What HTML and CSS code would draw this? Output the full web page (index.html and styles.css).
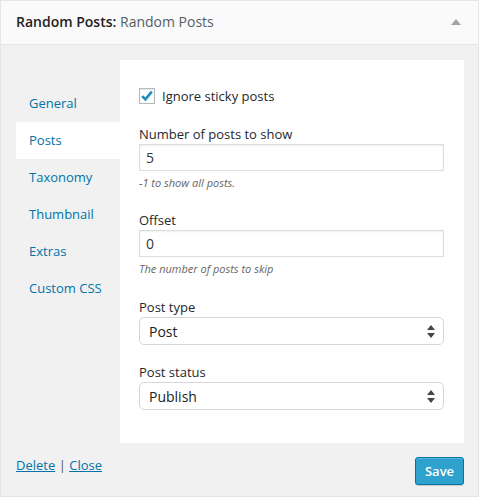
FILE: index.html
```html
<!DOCTYPE html>
<html>
<head>
<meta charset="utf-8">
<link rel="stylesheet" href="styles.css">
</head>
<body>
<div class="widget">
  <div class="widget-top">
    <h3 class="widget-title">Random Posts:<span class="in-title"> Random Posts</span></h3>
    <svg class="toggle" width="10" height="6" viewBox="0 0 10 6"><path d="M0 6 L5 0 L10 6 Z" fill="#a0a5aa"/></svg>
  </div>
  <div class="widget-inside">
    <div class="tabs-wrap">
      <ul class="tabs">
        <li class="tab">General</li>
        <li class="tab active">Posts</li>
        <li class="tab">Taxonomy</li>
        <li class="tab">Thumbnail</li>
        <li class="tab">Extras</li>
        <li class="tab">Custom CSS</li>
      </ul>
      <div class="panel">
        <label class="check-row">
          <span class="checkbox"><svg width="14" height="14" viewBox="0 0 14 14"><path d="M2.2 7.2 L5.4 10.4 L11.8 2.6" fill="none" stroke="#1e8cbe" stroke-width="2.6"/></svg></span>
          <span>Ignore sticky posts</span>
        </label>
        <div class="field f1">
          <div class="label">Number of posts to show</div>
          <div class="input">5</div>
          <div class="hint">-1 to show all posts.</div>
        </div>
        <div class="field f2">
          <div class="label">Offset</div>
          <div class="input">0</div>
          <div class="hint">The number of posts to skip</div>
        </div>
        <div class="field f3">
          <div class="label">Post type</div>
          <div class="select"><span>Post</span><svg width="8" height="13" viewBox="0 0 8 13"><path d="M4 0 L8 5 L0 5 Z M0 8 L8 8 L4 13 Z" fill="#444"/></svg></div>
        </div>
        <div class="field f4">
          <div class="label">Post status</div>
          <div class="select"><span>Publish</span><svg width="8" height="13" viewBox="0 0 8 13"><path d="M4 0 L8 5 L0 5 Z M0 8 L8 8 L4 13 Z" fill="#444"/></svg></div>
        </div>
      </div>
    </div>
    <div class="actions">
      <div class="links"><a>Delete</a> <span class="sep">|</span> <a>Close</a></div>
      <button class="save">Save</button>
    </div>
  </div>
</div>
</body>
</html>
```
FILE: styles.css
```css
html, body {
  margin: 0;
  padding: 0;
  background: #fff;
  font-family: "Open Sans", "Liberation Sans", sans-serif;
  color: #23282d;
}
.widget {
  width: 477px;
  border: 1px solid #e5e5e5;
  box-shadow: 0 1px 1px rgba(0,0,0,.04);
}
.widget-top {
  height: 43px;
  background: #fafafa;
  border-bottom: 1px solid #e5e5e5;
  display: flex;
  align-items: center;
  justify-content: space-between;
  padding: 0 16px 0 15px;
}
.widget-title {
  margin: 0;
  font-size: 14px;
  font-weight: 600;
  color: #222;
  line-height: 1;
  padding-bottom: 2px;
}
.in-title {
  font-weight: 400;
  color: #555d66;
}
.toggle { margin-right: 1px; margin-top: -2px; }
.widget-inside {
  background: #f1f1f1;
  padding: 15px 14px 11px 15px;
}
.tabs-wrap {
  display: flex;
}
.tabs {
  list-style: none;
  margin: 0;
  padding: 25px 0 0 0;
  width: 104px;
}
.tab {
  height: 37px;
  line-height: 36px;
  padding-left: 13px;
  font-size: 13px;
  color: #0073aa;
}
.tab.active {
  background: #fff;
}
.panel {
  background: #fff;
  width: 344px;
  padding: 27px 20px 0 19px;
  box-sizing: border-box;
  height: 383px;
}
.check-row {
  display: flex;
  align-items: center;
  font-size: 13px;
  height: 18px;
  gap: 7px;
}
.checkbox {
  width: 16px;
  height: 16px;
  box-sizing: border-box;
  border: 1px solid #b4b9be;
  box-shadow: inset 0 1px 2px rgba(0,0,0,.1);
  display: flex;
  align-items: center;
  justify-content: center;
  background: #fff;
}
.field.f1 { margin-top: 19px; }
.field.f2 { margin-top: 20px; }
.field.f3 { margin-top: 21px; }
.field.f4 { margin-top: 17px; }
.label {
  font-size: 13px;
  line-height: 20px;
  height: 20px;
}
.input {
  height: 27px;
  box-sizing: border-box;
  border: 1px solid #ddd;
  box-shadow: inset 0 1px 2px rgba(0,0,0,.07);
  font-size: 14px;
  line-height: 25px;
  padding-left: 6px;
  color: #32373c;
}
.hint {
  font-size: 11px;
  font-style: italic;
  color: #666;
  margin-top: 4px;
  line-height: 15px;
}
.select {
  height: 28px;
  box-sizing: border-box;
  border: 1px solid #d6d6d6;
  border-radius: 5px;
  background: #fff;
  display: flex;
  align-items: center;
  justify-content: space-between;
  padding: 0 8px 0 9px;
  font-size: 14px;
  color: #222;
}
.actions {
  display: flex;
  justify-content: space-between;
  align-items: center;
  padding-top: 14px;
}
.links {
  font-size: 13px;
  color: #0073aa;
  margin-top: -12px;
}
.links a {
  text-decoration: underline;
  color: #0073aa;
}
.sep { color: #555; }
.save {
  font-family: "Open Sans", "Liberation Sans", sans-serif;
  height: 28px;
  width: 49px;
  padding: 0;
  font-size: 13px;
  font-weight: 600;
  color: #fff;
  background: #2ea2cc;
  border: 1px solid #0074a2;
  border-radius: 3px;
  box-shadow: inset 0 1px 0 rgba(120,200,230,.5), 0 1px 0 rgba(0,0,0,.15);
}
```
